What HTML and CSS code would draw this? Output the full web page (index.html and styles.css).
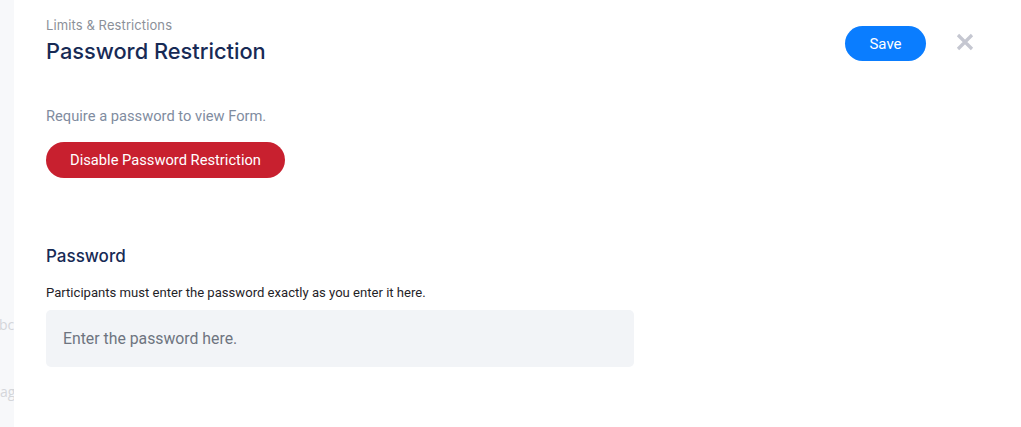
FILE: index.html
```html
<!DOCTYPE html>
<html>
<head>
<meta charset="utf-8">
<link rel="stylesheet" href="styles.css">
</head>
<body>
<div class="layout">
  <aside class="side">
    <span class="side-word w1">bc</span>
    <span class="side-word w2">ag</span>
  </aside>
  <main class="panel">
    <header class="head">
      <div class="titles">
        <div class="crumb">Limits &amp; Restrictions</div>
        <h1 class="title">Password Restriction</h1>
      </div>
      <div class="actions">
        <button class="btn-save">Save</button>
        <button class="btn-close" aria-label="Close">
          <svg width="18" height="18" viewBox="0 0 18 18"><path d="M2 2 L16 16 M16 2 L2 16" stroke="#c5c7d1" stroke-width="3.2" stroke-linecap="butt"/></svg>
        </button>
      </div>
    </header>
    <p class="lead">Require a password to view Form.</p>
    <button class="btn-danger">Disable Password Restriction</button>
    <section class="field">
      <h2 class="field-title">Password</h2>
      <p class="field-help">Participants must enter the password exactly as you enter it here.</p>
      <input class="field-input" type="text" placeholder="Enter the password here.">
    </section>
  </main>
</div>
</body>
</html>
```
FILE: styles.css
```css
* { box-sizing: border-box; }
html, body { margin: 0; padding: 0; background: #fff; }
body { font-family: Roboto, "Liberation Sans", sans-serif; height: 427px; overflow: hidden; }
.layout { display: flex; height: 427px; }
.side {
  width: 14px;
  flex: none;
  background: #f7f8fa;
  position: relative;
  overflow: hidden;
  font-family: "Open Sans", sans-serif;
  font-size: 14px;
  color: #d4d6da;
}
.side-word { position: absolute; left: -1px; }
.side-word.w1 { top: 315px; }
.side-word.w2 { top: 382px; left: 0; }
.panel { flex: 1; padding: 16px 0 0 32px; }
.head { display: flex; justify-content: space-between; align-items: flex-start; width: 928px; }
.crumb {
  font-family: Inter, sans-serif;
  font-size: 13px;
  color: #8b9099;
  line-height: 18px;
  letter-spacing: 0.1px;
}
.title {
  margin: 3px 0 0;
  font-family: Inter, sans-serif;
  font-weight: 500;
  font-size: 21.8px;
  line-height: 28px;
  color: #172a55;
  letter-spacing: 0;
}
.actions { display: flex; align-items: center; gap: 30px; margin-top: 10px; }
.btn-save {
  width: 81px; height: 35px;
  border: 0; border-radius: 18px;
  background: #0a7dff;
  color: #fff;
  font-family: Roboto, sans-serif;
  font-size: 15px;
  padding: 0;
}
.btn-close { border: 0; background: none; padding: 0; width: 18px; height: 18px; display: flex; margin-bottom: 4px; }
.lead {
  margin: 42px 0 0;
  font-size: 14.7px;
  line-height: 18px;
  color: #7f8ca0;
}
.btn-danger {
  margin-top: 17px;
  width: 239px; height: 36px;
  border: 0; border-radius: 18px;
  background: #c8202f;
  color: #fff;
  font-family: Roboto, sans-serif;
  font-size: 14.7px;
  padding: 0;
  display: block;
}
.field { margin-top: 67px; }
.field-title {
  margin: 0;
  font-family: Inter, sans-serif;
  font-weight: 500;
  font-size: 17px;
  line-height: 22px;
  color: #172a55;
}
.field-help {
  margin: 18px 0 0;
  font-size: 13.1px;
  line-height: 16px;
  color: #1f2328;
}
.field-input {
  margin-top: 9px;
  display: block;
  width: 588px; height: 57px;
  border: 0; border-radius: 5px;
  background: #f2f4f7;
  padding: 0 17px;
  font-family: Roboto, sans-serif;
  font-size: 15.8px;
  color: #333;
  outline: none;
}
.field-input::placeholder { color: #6e7480; }
```
